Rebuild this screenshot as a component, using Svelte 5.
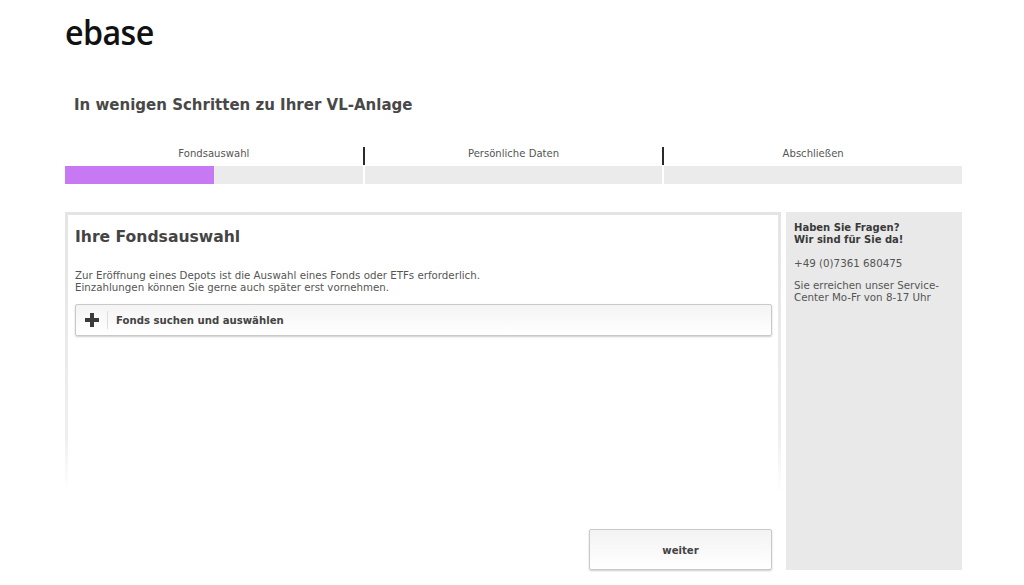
<script>
  const steps = [
    { label: 'Fondsauswahl', fill: 50 },
    { label: 'Persönliche Daten', fill: 0 },
    { label: 'Abschließen', fill: 0 }
  ];
</script>

<div class="page">
  <header class="logo">ebase</header>
  <h1>In wenigen Schritten zu Ihrer VL-Anlage</h1>

  <div class="steps">
    {#each steps as step, i}
      <div class="step" class:divided={i > 0}>
        <div class="label">{step.label}</div>
        <div class="track"><div class="fill" style="width: {step.fill}%"></div></div>
      </div>
    {/each}
  </div>

  <div class="columns">
    <main class="main">
      <section class="card">
        <h2>Ihre Fondsauswahl</h2>
        <p>Zur Eröffnung eines Depots ist die Auswahl eines Fonds oder ETFs erforderlich.<br />Einzahlungen können Sie gerne auch später erst vornehmen.</p>
        <button class="add" type="button">
          <span class="icon">
            <svg width="16" height="16" viewBox="0 0 16 16" aria-hidden="true"><path d="M6 1h4v5h5v4h-5v5H6v-5H1V6h5z" fill="#3a3a3a" /></svg>
          </span>
          <span>Fonds suchen und auswählen</span>
        </button>
      </section>
      <div class="actions">
        <button class="next" type="button"><span>weiter</span></button>
      </div>
    </main>
    <aside class="side">
      <p class="strong">Haben Sie Fragen?<br />Wir sind für Sie da!</p>
      <p class="phone">+49 (0)7361 680475</p>
      <p>Sie erreichen unser Service-<br />Center Mo-Fr von 8-17 Uhr</p>
    </aside>
  </div>
</div>

<style>
  :global(body) {
    margin: 0;
    background: #fff;
  }
  .page {
    width: 897px;
    height: 585px;
    margin-left: 65px;
    font-family: "DejaVu Sans", Verdana, sans-serif;
    color: #444;
    overflow: hidden;
  }
  .logo {
    font-family: "Open Sans", "Noto Sans", sans-serif;
    font-size: 35px;
    font-weight: 600;
    line-height: 36px;
    letter-spacing: -0.6px;
    color: #111;
    padding-top: 14px;
    height: 37px;
    transform: scaleX(0.92);
    transform-origin: left top;
  }
  h1 {
    margin: 44px 0 0 9px;
    font-size: 15px;
    line-height: 20px;
    font-weight: bold;
    color: #484848;
  }
  .steps {
    display: flex;
    gap: 2px;
    margin-top: 32px;
  }
  .step {
    flex: 1;
    position: relative;
  }
  .step.divided::before {
    content: "";
    position: absolute;
    left: -2px;
    top: 0;
    width: 2px;
    height: 18px;
    background: #2a2a2a;
  }
  .label {
    height: 18px;
    padding-top: 1px;
    font-size: 10.07px;
    line-height: 12px;
    text-align: center;
    color: #555;
  }
  .track {
    height: 18px;
    background: #ebebeb;
  }
  .fill {
    height: 100%;
    background: #c679f2;
  }
  .columns {
    display: flex;
    gap: 5px;
    margin-top: 28px;
  }
  .main {
    width: 716px;
    height: 358px;
    display: flex;
    flex-direction: column;
    justify-content: space-between;
  }
  .card {
    height: 278px;
    box-sizing: border-box;
    padding: 12px 7px 0 7px;
    border: 3px solid #e6e6e6;
    border-bottom: 0;
    border-image: linear-gradient(to bottom, #e4e4e4 0, #efefef 80%, #fff 100%) 3;
  }
  h2 {
    margin: 0;
    font-size: 15.6px;
    line-height: 20px;
    font-weight: bold;
    color: #444;
  }
  .card p {
    margin: 22px 0 0;
    font-size: 10.25px;
    line-height: 12px;
    color: #555;
  }
  .add {
    display: flex;
    align-items: center;
    width: 697px;
    height: 32px;
    margin-top: 11px;
    padding: 0;
    border: 1px solid #c9c9c9;
    border-radius: 2px;
    background: linear-gradient(to bottom, #f4f4f4, #fff);
    box-shadow: 0 1px 2px rgba(0, 0, 0, 0.2);
    font: bold 10.14px "DejaVu Sans", Verdana, sans-serif;
    color: #444;
  }
  .icon {
    display: flex;
    align-items: center;
    justify-content: center;
    width: 31px;
    height: 18px;
    margin-right: 8px;
    border-right: 1px solid #ddd;
  }
  .actions {
    display: flex;
    justify-content: flex-end;
    padding-right: 9px;
  }
  .next {
    width: 183px;
    height: 41px;
    padding: 1px 0 0;
    border: 1px solid #c9c9c9;
    border-radius: 2px;
    background: linear-gradient(to bottom, #f3f3f3, #fff);
    box-shadow: 0 1px 2px rgba(0, 0, 0, 0.2);
    font: bold 10.14px "DejaVu Sans", Verdana, sans-serif;
    color: #444;
  }
  .side {
    width: 176px;
    height: 358px;
    box-sizing: border-box;
    padding: 10px 8px;
    background: #e9e9e9;
    font-size: 10.3px;
    line-height: 12px;
    color: #555;
  }
  .side p {
    margin: 0 0 11px;
  }
  .side .strong {
    font-size: 10.03px;
    line-height: 12px;
    font-weight: bold;
    color: #3a3a3a;
  }
  .side .phone {
    margin-bottom: 10px;
  }
</style>
